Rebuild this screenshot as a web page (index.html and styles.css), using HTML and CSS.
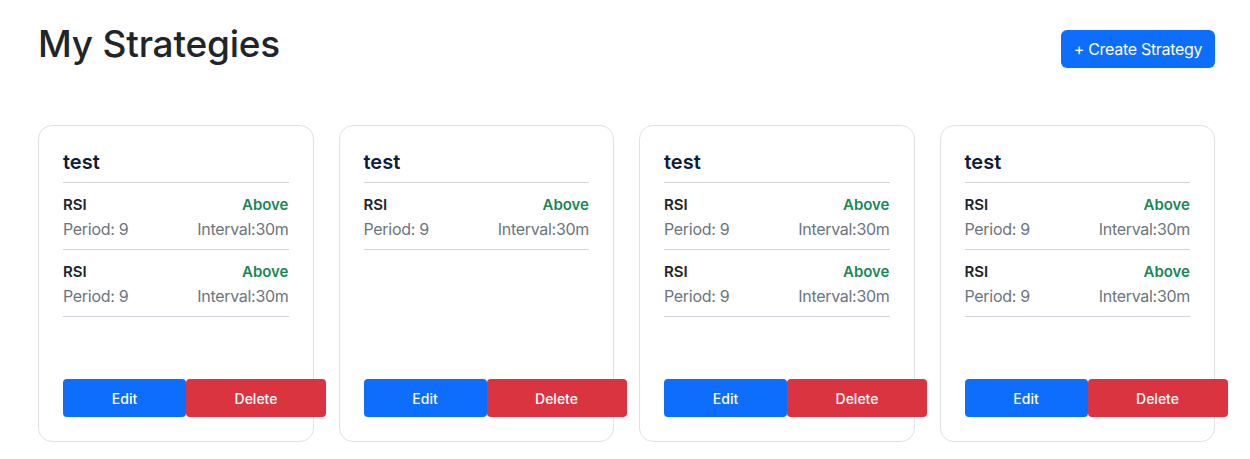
FILE: index.html
```html
<!DOCTYPE html>
<html lang="en">
<head>
<meta charset="utf-8">
<title>My Strategies</title>
<link rel="stylesheet" href="styles.css">
</head>
<body>
<div class="page">
  <header class="header">
    <h1 class="title">My Strategies</h1>
    <button class="btn btn-primary create">+ Create Strategy</button>
  </header>
  <section class="grid">
    <article class="card">
      <h2 class="card-title">test</h2>
      <div class="item">
        <div class="row"><span class="ind">RSI</span><span class="cond">Above</span></div>
        <div class="row meta"><span>Period: 9</span><span>Interval:30m</span></div>
      </div>
      <div class="item">
        <div class="row"><span class="ind">RSI</span><span class="cond">Above</span></div>
        <div class="row meta"><span>Period: 9</span><span>Interval:30m</span></div>
      </div>
      <div class="actions">
        <button class="btn btn-primary edit">Edit</button>
        <button class="btn btn-danger del">Delete</button>
      </div>
    </article>
    <article class="card">
      <h2 class="card-title">test</h2>
      <div class="item">
        <div class="row"><span class="ind">RSI</span><span class="cond">Above</span></div>
        <div class="row meta"><span>Period: 9</span><span>Interval:30m</span></div>
      </div>
      <div class="actions">
        <button class="btn btn-primary edit">Edit</button>
        <button class="btn btn-danger del">Delete</button>
      </div>
    </article>
    <article class="card">
      <h2 class="card-title">test</h2>
      <div class="item">
        <div class="row"><span class="ind">RSI</span><span class="cond">Above</span></div>
        <div class="row meta"><span>Period: 9</span><span>Interval:30m</span></div>
      </div>
      <div class="item">
        <div class="row"><span class="ind">RSI</span><span class="cond">Above</span></div>
        <div class="row meta"><span>Period: 9</span><span>Interval:30m</span></div>
      </div>
      <div class="actions">
        <button class="btn btn-primary edit">Edit</button>
        <button class="btn btn-danger del">Delete</button>
      </div>
    </article>
    <article class="card">
      <h2 class="card-title">test</h2>
      <div class="item">
        <div class="row"><span class="ind">RSI</span><span class="cond">Above</span></div>
        <div class="row meta"><span>Period: 9</span><span>Interval:30m</span></div>
      </div>
      <div class="item">
        <div class="row"><span class="ind">RSI</span><span class="cond">Above</span></div>
        <div class="row meta"><span>Period: 9</span><span>Interval:30m</span></div>
      </div>
      <div class="actions">
        <button class="btn btn-primary edit">Edit</button>
        <button class="btn btn-danger del">Delete</button>
      </div>
    </article>
  </section>
</div>
</body>
</html>
```

FILE: styles.css
```css
* { box-sizing: border-box; }
html, body { margin: 0; background: #fff; }
body {
  font-family: Inter, "Liberation Sans", Arial, sans-serif;
  color: #212529;
  font-size: 16px;
}
.page {
  padding: 20px 35px 0 38px;
}
.header {
  display: flex;
  justify-content: space-between;
  align-items: flex-start;
}
.title {
  margin: 0;
  font-size: 37px;
  line-height: 48px;
  font-weight: 500;
  letter-spacing: -0.2px;
  color: #212529;
}
.btn {
  font-family: inherit;
  border: none;
  color: #fff;
  cursor: pointer;
  padding: 0;
}
.btn-primary { background: #0d6efd; }
.btn-danger { background: #d9343f; }
.create {
  margin-top: 10px;
  height: 38px;
  width: 154px;
  font-size: 16px;
  letter-spacing: -0.3px;
  border-radius: 6px;
}
.grid {
  margin-top: 57px;
  display: grid;
  grid-template-columns: repeat(4, minmax(0, 1fr));
  column-gap: 25px;
}
.card {
  min-height: 317px;
  border: 1px solid #dee2e6;
  border-radius: 14px;
  padding: 24px;
  display: flex;
  flex-direction: column;
}
.card-title {
  margin: 0;
  font-size: 20px;
  line-height: 24px;
  font-weight: 600;
  color: #0e1c3b;
  padding-bottom: 8px;
  border-bottom: 1px solid #ced4da;
}
.item {
  padding: 11px 0 8px;
  border-bottom: 1px solid #ced4da;
}
.row {
  display: flex;
  justify-content: space-between;
  font-size: 15px;
  line-height: 22px;
}
.ind { font-weight: 600; color: #212529; }
.cond { font-weight: 600; color: #198754; }
.row.meta {
  padding-top: 1px;
  font-size: 16px;
  line-height: 24px;
  letter-spacing: -0.3px;
  color: #6c757d;
}
.actions {
  margin-top: auto;
  display: flex;
}
.edit, .del {
  height: 38px;
  font-size: 14px;
  font-weight: 500;
  border-radius: 4px;
  flex: none;
}
.edit { width: 123px; }
.del { width: 140px; }
```
